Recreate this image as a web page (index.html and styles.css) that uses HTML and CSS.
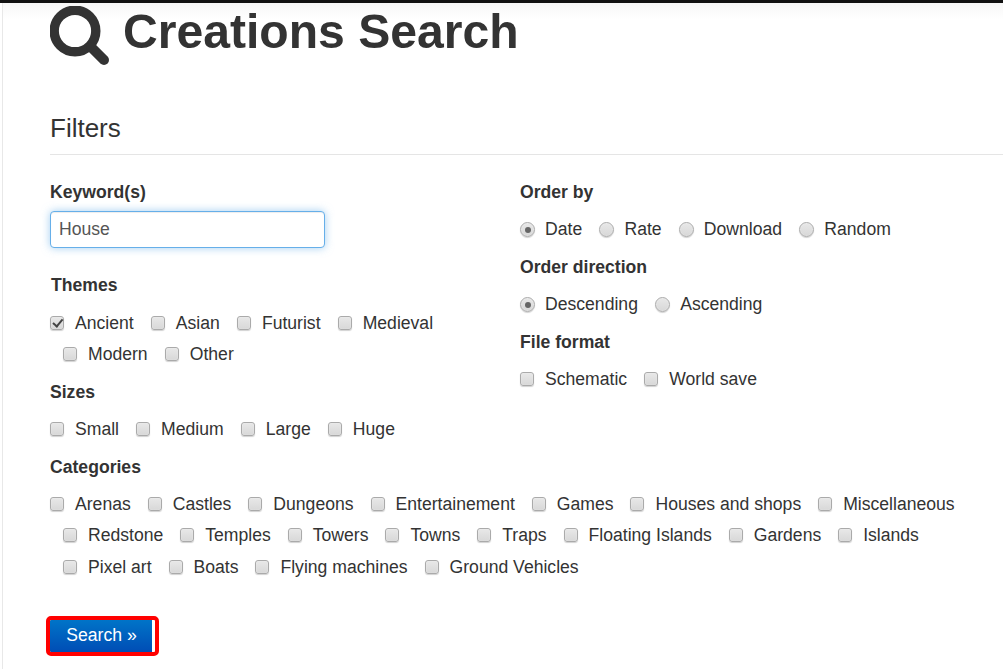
FILE: index.html
```html
<!DOCTYPE html>
<html lang="en">
<head>
<meta charset="utf-8">
<title>Creations Search</title>
<link rel="stylesheet" href="styles.css">
</head>
<body>
<div class="topbar"></div>
<main class="shell">
  <h1 class="title">
    <svg class="title-icon" viewBox="0 0 60 60" aria-hidden="true"><circle cx="25" cy="25" r="20.8" fill="none" stroke="#333" stroke-width="9.4"/><line x1="41" y1="41" x2="54" y2="54" stroke="#333" stroke-width="10" stroke-linecap="round"/></svg>
    <span>Creations Search</span>
  </h1>
  <h2 class="section-title">Filters</h2>
  <form class="filters">
    <div class="columns">
      <div class="col-left">
        <div class="field-label">Keyword(s)</div>
        <input class="text-input" type="text" value="House">
        <div class="field-label themes-label">Themes</div>
        <div class="opts themes-opts">
          <label class="opt"><input type="checkbox" checked>Ancient</label>
          <label class="opt"><input type="checkbox">Asian</label>
          <label class="opt"><input type="checkbox">Futurist</label>
          <label class="opt"><input type="checkbox">Medieval</label>
          <label class="opt"><input type="checkbox">Modern</label>
          <label class="opt"><input type="checkbox">Other</label>
        </div>
        <div class="field-label">Sizes</div>
        <div class="opts">
          <label class="opt"><input type="checkbox">Small</label>
          <label class="opt"><input type="checkbox">Medium</label>
          <label class="opt"><input type="checkbox">Large</label>
          <label class="opt"><input type="checkbox">Huge</label>
        </div>
      </div>
      <div class="col-right">
        <div class="field-label">Order by</div>
        <div class="opts">
          <label class="opt"><input type="radio" name="by" checked>Date</label>
          <label class="opt"><input type="radio" name="by">Rate</label>
          <label class="opt"><input type="radio" name="by">Download</label>
          <label class="opt"><input type="radio" name="by">Random</label>
        </div>
        <div class="field-label">Order direction</div>
        <div class="opts">
          <label class="opt"><input type="radio" name="dir" checked>Descending</label>
          <label class="opt"><input type="radio" name="dir">Ascending</label>
        </div>
        <div class="field-label">File format</div>
        <div class="opts">
          <label class="opt"><input type="checkbox">Schematic</label>
          <label class="opt"><input type="checkbox">World save</label>
        </div>
      </div>
    </div>
    <div class="field-label">Categories</div>
    <div class="opts category-opts">
      <label class="opt"><input type="checkbox">Arenas</label>
      <label class="opt"><input type="checkbox">Castles</label>
      <label class="opt"><input type="checkbox">Dungeons</label>
      <label class="opt"><input type="checkbox">Entertainement</label>
      <label class="opt"><input type="checkbox">Games</label>
      <label class="opt"><input type="checkbox">Houses and shops</label>
      <label class="opt"><input type="checkbox">Miscellaneous</label>
      <label class="opt"><input type="checkbox">Redstone</label>
      <label class="opt"><input type="checkbox">Temples</label>
      <label class="opt"><input type="checkbox">Towers</label>
      <label class="opt"><input type="checkbox">Towns</label>
      <label class="opt"><input type="checkbox">Traps</label>
      <label class="opt"><input type="checkbox">Floating Islands</label>
      <label class="opt"><input type="checkbox">Gardens</label>
      <label class="opt"><input type="checkbox">Islands</label>
      <label class="opt"><input type="checkbox">Pixel art</label>
      <label class="opt"><input type="checkbox">Boats</label>
      <label class="opt"><input type="checkbox">Flying machines</label>
      <label class="opt"><input type="checkbox">Ground Vehicles</label>
    </div>
    <button class="search-btn" type="button">Search »</button>
  </form>
</main>
</body>
</html>
```
FILE: styles.css
```css
html, body {
  margin: 0;
  height: 100%;
  overflow: hidden;
  background: #fff;
}
body {
  font-family: "Liberation Sans", Arial, sans-serif;
  font-size: 17.6px;
  line-height: 25px;
  color: #333;
}
.topbar {
  height: 3px;
  background: #111;
}
.shell {
  margin-left: 2px;
  border-left: 1px solid #e8e8e8;
  padding: 0 0 0 47px;
  height: 666px;
  box-sizing: border-box;
  background: linear-gradient(#f6f6f6, #fff 16px);
}
.title {
  display: flex;
  align-items: flex-start;
  gap: 13px;
  margin: 0;
  height: 114px;
  font-size: 48.1px;
  font-weight: 700;
  line-height: 56px;
  color: #333;
}
.title-icon {
  width: 60px;
  height: 60px;
  margin-top: 3px;
  flex: none;
}
.section-title {
  margin: 0;
  height: 37px;
  border-bottom: 1px solid #e5e5e5;
  font-size: 26px;
  font-weight: 400;
  line-height: 22px;
}
.filters {
  padding-top: 25px;
}
.columns {
  display: flex;
}
.col-left {
  width: 470px;
  flex: none;
}
.col-right {
  flex: 1;
}
.field-label {
  font-weight: 700;
  margin-bottom: 9.2px;
}
.col-right .field-label {
  margin-bottom: 9px;
}
.themes-label {
  margin-left: 1px;
  margin-top: 25px;
  margin-bottom: 9.7px;
}
.text-input {
  display: block;
  box-sizing: border-box;
  width: 275px;
  height: 37px;
  margin-top: -3px;
  padding: 0 8px;
  border: 1px solid #66afe9;
  border-radius: 4px;
  box-shadow: inset 0 1px 1px rgba(0,0,0,.075), 0 0 8px rgba(102,175,233,.6);
  outline: none;
  font: 17.6px "Liberation Sans", Arial, sans-serif;
  color: #555;
}
.opts {
  line-height: 31.25px;
  margin-bottom: 9.8px;
}
.themes-opts {
  margin-bottom: 9.3px;
}
.category-opts {
  margin-bottom: 37px;
}
.opt {
  display: inline-block;
  margin-left: 13px;
  margin-right: -0.8px;
}
.category-opts .opt {
  margin-right: -0.95px;
}
.opt:has(input[type="radio"]) {
  margin-right: -0.65px;
}
.opt:first-child {
  margin-left: 0;
}
.opt input {
  appearance: none;
  -webkit-appearance: none;
  box-sizing: border-box;
  position: relative;
  width: 14px;
  height: 14px;
  margin: 0 11px 0 0;
  vertical-align: -1px;
  border: 1px solid #aaa;
  background: linear-gradient(#e8e8e8, #d8d8d8);
  box-shadow: 0 1px 1px rgba(0,0,0,.18), inset 0 0 1px #fff;
}
.opt input[type="checkbox"] {
  border-radius: 3px;
}
.opt input[type="radio"] {
  width: 15px;
  height: 15px;
  margin-right: 10px;
  vertical-align: -2px;
  border-radius: 50%;
}
.opt input[type="checkbox"]:checked::after {
  content: "";
  position: absolute;
  left: 3.5px;
  top: 0.5px;
  width: 4px;
  height: 7.5px;
  border: solid #444;
  border-width: 0 2.6px 2.6px 0;
  transform: rotate(40deg);
}
.opt input[type="radio"]:checked::after {
  content: "";
  position: absolute;
  left: 3.5px;
  top: 3.5px;
  width: 6px;
  height: 6px;
  border-radius: 50%;
  background: #666;
}
.search-btn {
  display: block;
  box-sizing: border-box;
  width: 105px;
  height: 32px;
  margin: 0;
  padding: 0 0 0 1px;
  border: 0;
  border-right: 3px solid #fff;
  outline: 4px solid #f00;
  outline-offset: 0;
  border-radius: 1px;
  background: linear-gradient(#0074c8, #004db5);
  color: #fff;
  font: 17.6px "Liberation Sans", Arial, sans-serif;
  text-align: center;
}
```
